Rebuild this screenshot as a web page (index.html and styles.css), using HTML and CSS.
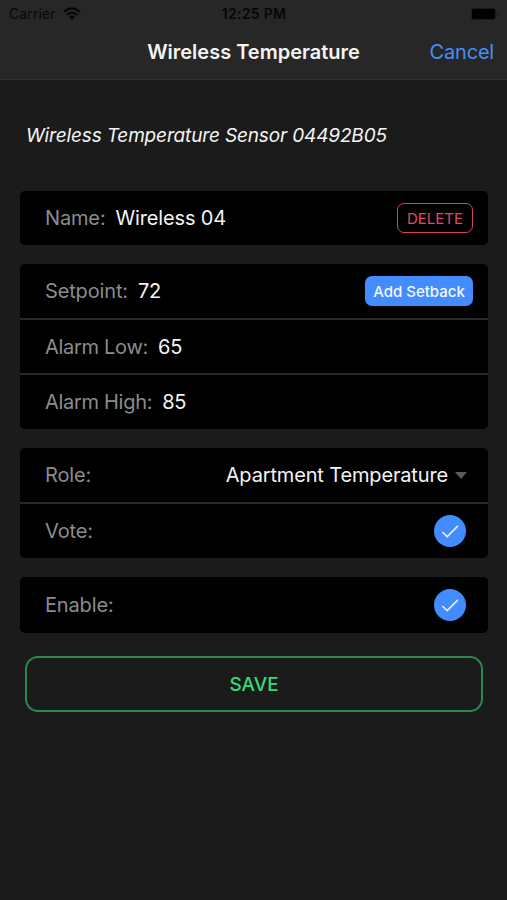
FILE: index.html
```
<!DOCTYPE html>
<html lang="en">
<head>
  <meta charset="UTF-8">
  <meta name="viewport" content="width=device-width, initial-scale=1.0">
  <title>Wireless Temperature</title>
  <link rel="stylesheet" href="styles.css">
</head>
<body>
  <header class="header">
    <div class="status-bar">
      <div class="carrier">
        <span class="carrier-name">Carrier</span>
        <svg class="wifi" width="18" height="13" viewBox="0 0 18 13" fill="none" stroke="#060606" stroke-width="2.3">
          <path d="M1 5 Q9 -2.2 17 5"/>
          <path d="M3.9 8 Q9 3.2 14.1 8"/>
          <path d="M9 12.8 L6 9.8 Q9 7.4 12 9.8 Z" fill="#060606" stroke="none"/>
        </svg>
      </div>
      <span class="time">12:25 PM</span>
      <div class="battery-wrap">
        <span class="battery"></span>
        <span class="battery-tip"></span>
      </div>
    </div>
    <nav class="nav">
      <h1 class="title">Wireless Temperature</h1>
      <a class="cancel" href="#">Cancel</a>
    </nav>
  </header>
  <main class="content">
    <p class="device">Wireless Temperature Sensor 04492B05</p>

    <section class="card">
      <div class="row">
        <span class="label">Name:</span>
        <span class="value">Wireless 04</span>
        <button class="button delete">DELETE</button>
      </div>
    </section>

    <section class="card">
      <div class="row">
        <span class="label">Setpoint:</span>
        <span class="value">72</span>
        <button class="button setback">Add Setback</button>
      </div>
      <div class="row">
        <span class="label alarm">Alarm Low:</span>
        <span class="value">65</span>
      </div>
      <div class="row last">
        <span class="label alarm">Alarm High:</span>
        <span class="value">85</span>
      </div>
    </section>

    <section class="card">
      <div class="row">
        <span class="label">Role:</span>
        <div class="select">
          <span>Apartment Temperature</span>
          <span class="caret"></span>
        </div>
      </div>
      <div class="row last">
        <span class="label">Vote:</span>
        <span class="check">
          <svg width="32" height="32" viewBox="0 0 32 32"><path d="M8.3 17 L13.2 21.6 L23.9 10.9"/></svg>
        </span>
      </div>
    </section>

    <section class="card">
      <div class="row last">
        <span class="label">Enable:</span>
        <span class="check">
          <svg width="32" height="32" viewBox="0 0 32 32"><path d="M8.3 17 L13.2 21.6 L23.9 10.9"/></svg>
        </span>
      </div>
    </section>

    <button class="save">SAVE</button>
  </main>
</body>
</html>
```
FILE: styles.css
```
* {
  box-sizing: border-box;
}
body {
  margin: 0;
  height: 900px;
  font-family: Inter, "Liberation Sans", sans-serif;
  background-color: #1b1b1b;
  color: #f4f4f4;
  overflow: hidden;
}
button {
  font-family: inherit;
  padding: 0;
}
.header {
  height: 80px;
  background-color: #272727;
  border-bottom: 1px solid #303030;
}
.status-bar {
  display: grid;
  grid-template-columns: 1fr auto 1fr;
  align-items: center;
  height: 27px;
  padding: 0 8px 0 9px;
  color: #060606;
  font-size: 14px;
}
.carrier {
  display: flex;
  align-items: center;
  gap: 7px;
}
.carrier-name {
  letter-spacing: 0.1px;
}
.time {
  font-size: 14px;
  font-weight: 600;
  letter-spacing: 0.3px;
}
.battery-wrap {
  display: flex;
  align-items: center;
  justify-content: flex-end;
  gap: 1px;
}
.battery {
  width: 25px;
  height: 12px;
  border: 1px solid #1b1b1b;
  border-radius: 3px;
  background-color: #000000;
}
.battery-tip {
  width: 2px;
  height: 4px;
  border-radius: 0 2px 2px 0;
  background-color: #1b1b1b;
}
.nav {
  display: grid;
  grid-template-columns: 1fr auto 1fr;
  align-items: center;
  height: 49px;
  padding: 0 13px;
}
.title {
  grid-column: 2;
  margin: 0;
  font-size: 20px;
  font-weight: 600;
  white-space: nowrap;
}
.cancel {
  justify-self: end;
  color: #468ff5;
  font-size: 20px;
  letter-spacing: -0.2px;
  text-decoration: none;
}
.content {
  display: flex;
  flex-direction: column;
  padding: 44px 19px 0 20px;
}
.device {
  margin: 0 0 43px 6px;
  font-size: 19px;
  font-style: italic;
  line-height: 24px;
  letter-spacing: -0.15px;
}
.card {
  margin-bottom: 19px;
  border-radius: 5px;
  background-color: #000000;
  overflow: hidden;
}
.row {
  display: flex;
  align-items: center;
  height: 54px;
  padding: 0 15px 0 25px;
  font-size: 20px;
  letter-spacing: -0.15px;
  white-space: nowrap;
}
.row + .row {
  height: 55px;
  border-top: 2px solid #292929;
}
.row.last {
  height: 56px;
}
.label {
  margin-right: 10px;
  color: #8b8c8e;
}
.alarm {
  letter-spacing: -0.3px;
}
.button {
  height: 30px;
  margin-left: auto;
  border-radius: 7px;
  font-size: 15px;
}
.delete {
  width: 76px;
  border: 1px solid #d8435e;
  background: none;
  color: #e34a62;
}
.setback {
  width: 108px;
  border: none;
  background-color: #428cff;
  color: #f4f8ff;
  font-weight: 500;
}
.select {
  display: flex;
  align-items: center;
  gap: 7px;
  margin-left: auto;
  padding-right: 6px;
}
.caret {
  border-left: 6px solid transparent;
  border-right: 6px solid transparent;
  border-top: 7px solid #5c5c5c;
}
.check {
  display: flex;
  width: 32px;
  height: 32px;
  margin: 0 7px 0 auto;
  border-radius: 50%;
  background-color: #428cff;
}
.check path {
  fill: none;
  stroke: #e8f1ff;
  stroke-width: 1.5;
}
.save {
  height: 56px;
  margin: 4px 5px 0;
  border: 2px solid #2c8751;
  border-radius: 13px;
  background: none;
  color: #38d977;
  font-size: 19px;
  font-weight: 500;
}
```
